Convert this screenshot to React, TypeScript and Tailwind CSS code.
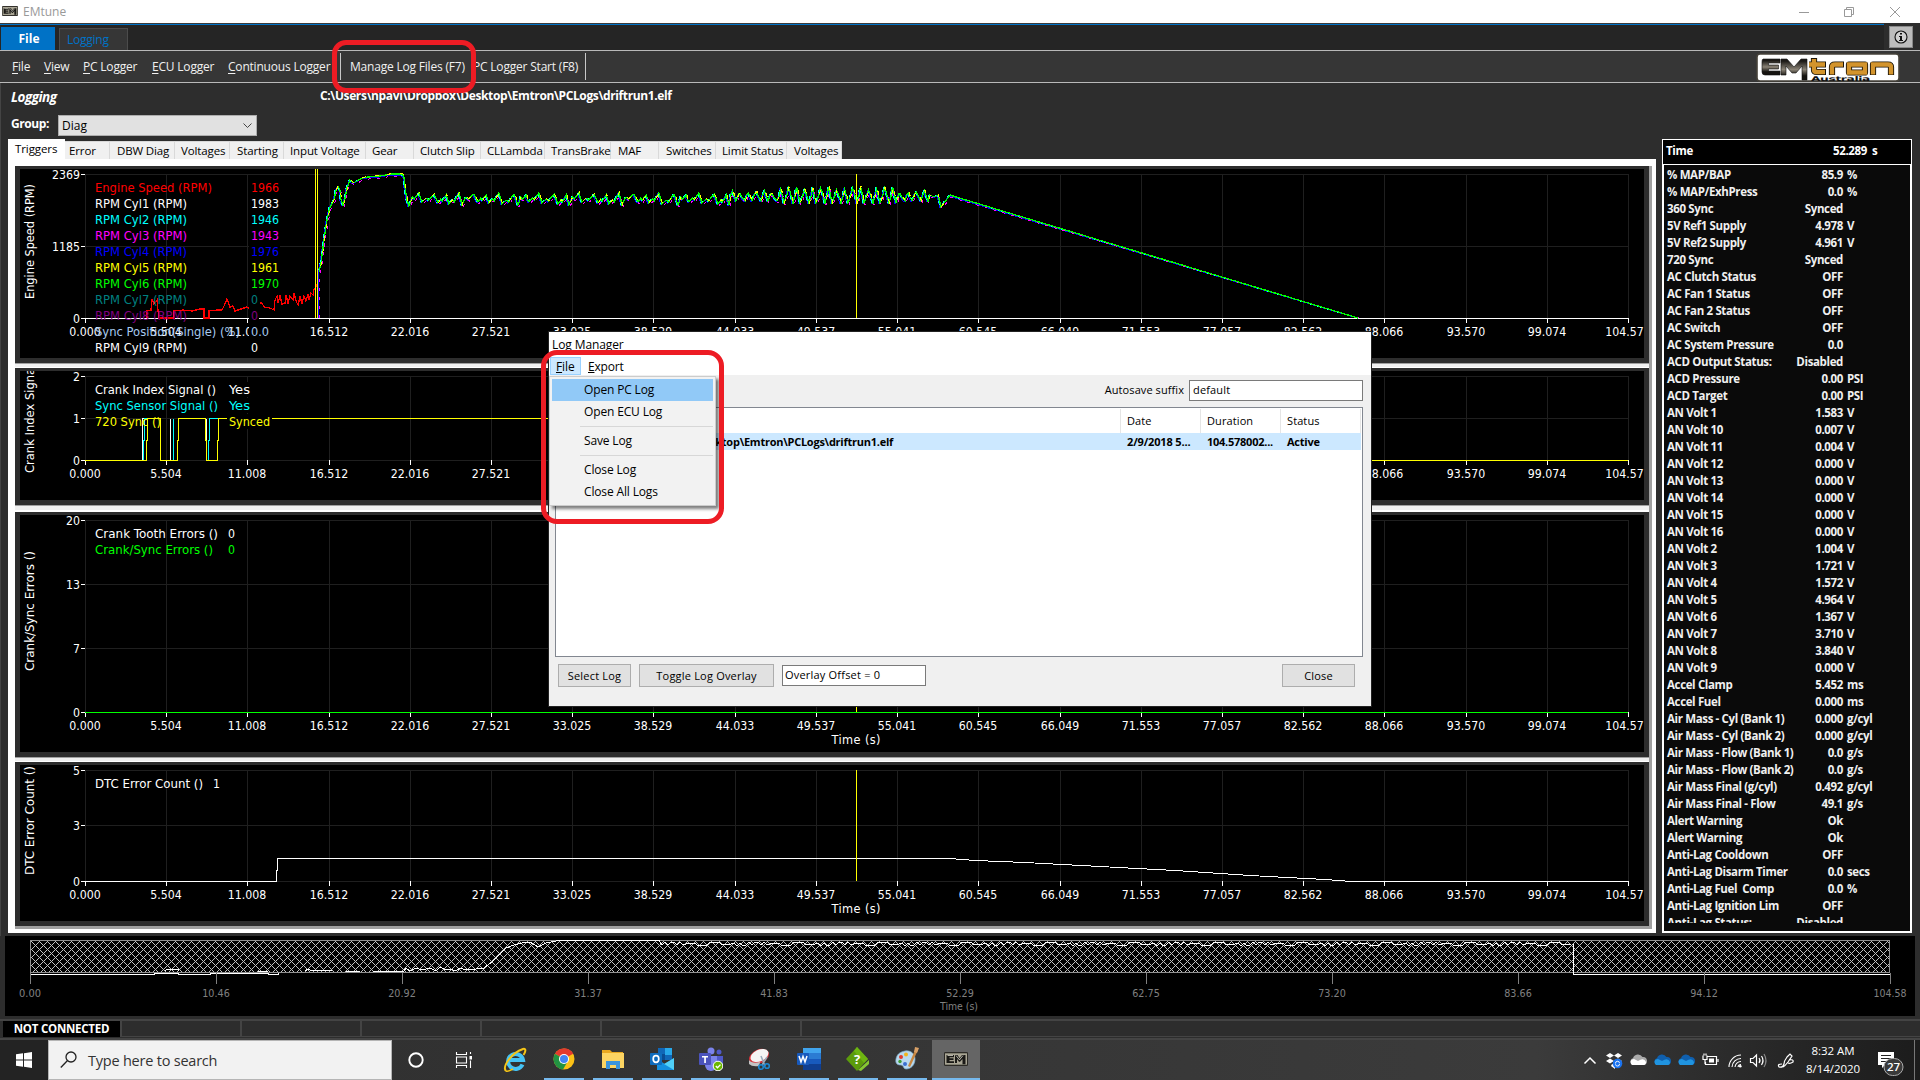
import React from "react";

const SEGOE = "font-['Open_Sans',sans-serif]";
const CHART_FONT = "'DejaVu Sans Condensed','DejaVu Sans',sans-serif";

/* ------------------------------------------------------------------ data */

const menuItems: [string, string][] = [
  ["File", "w-[32px]"],
  ["View", "w-[39px]"],
  ["PC Logger", "w-[69px]"],
  ["ECU Logger", "w-[76px]"],
  ["Continuous Logger", "w-[112px]"],
];

const tabs: [string, string, string][] = [
  ["Error", "w-[45px]", "pl-[4px]"],
  ["DBW Diag", "w-[65px]", "pl-[7px]"],
  ["Voltages", "w-[55px]", "pl-[6px]"],
  ["Starting", "w-[54px]", "pl-[7px]"],
  ["Input Voltage", "w-[82px]", "pl-[6px]"],
  ["Gear", "w-[48px]", "pl-[6px]"],
  ["Clutch Slip", "w-[67px]", "pl-[6px]"],
  ["CLLambda", "w-[64px]", "pl-[6px]"],
  ["TransBrake", "w-[66px]", "pl-[6px]"],
  ["MAF", "w-[48px]", "pl-[7px]"],
  ["Switches", "w-[57px]", "pl-[7px]"],
  ["Limit Status", "w-[71px]", "pl-[6px]"],
  ["Voltages", "w-[55px]", "pl-[7px]"],
];

const channels: [string, string, string][] = [
  ["% MAP/BAP", "85.9", "%"],
  ["% MAP/ExhPress", "0.0", "%"],
  ["360 Sync", "Synced", ""],
  ["5V Ref1 Supply", "4.978", "V"],
  ["5V Ref2 Supply", "4.961", "V"],
  ["720 Sync", "Synced", ""],
  ["AC Clutch Status", "OFF", ""],
  ["AC Fan 1 Status", "OFF", ""],
  ["AC Fan 2 Status", "OFF", ""],
  ["AC Switch", "OFF", ""],
  ["AC System Pressure", "0.0", ""],
  ["ACD Output Status:", "Disabled", ""],
  ["ACD Pressure", "0.00", "PSI"],
  ["ACD Target", "0.00", "PSI"],
  ["AN Volt 1", "1.583", "V"],
  ["AN Volt 10", "0.007", "V"],
  ["AN Volt 11", "0.004", "V"],
  ["AN Volt 12", "0.000", "V"],
  ["AN Volt 13", "0.000", "V"],
  ["AN Volt 14", "0.000", "V"],
  ["AN Volt 15", "0.000", "V"],
  ["AN Volt 16", "0.000", "V"],
  ["AN Volt 2", "1.004", "V"],
  ["AN Volt 3", "1.721", "V"],
  ["AN Volt 4", "1.572", "V"],
  ["AN Volt 5", "4.964", "V"],
  ["AN Volt 6", "1.367", "V"],
  ["AN Volt 7", "3.710", "V"],
  ["AN Volt 8", "3.840", "V"],
  ["AN Volt 9", "0.000", "V"],
  ["Accel Clamp", "5.452", "ms"],
  ["Accel Fuel", "0.000", "ms"],
  ["Air Mass - Cyl (Bank 1)", "0.000", "g/cyl"],
  ["Air Mass - Cyl (Bank 2)", "0.000", "g/cyl"],
  ["Air Mass - Flow (Bank 1)", "0.0", "g/s"],
  ["Air Mass - Flow (Bank 2)", "0.0", "g/s"],
  ["Air Mass Final (g/cyl)", "0.492", "g/cyl"],
  ["Air Mass Final - Flow", "49.1", "g/s"],
  ["Alert Warning", "Ok", ""],
  ["Alert Warning", "Ok", ""],
  ["Anti-Lag Cooldown", "OFF", ""],
  ["Anti-Lag Disarm Timer", "0.0", "secs"],
  ["Anti-Lag Fuel  Comp", "0.0", "%"],
  ["Anti-Lag Ignition Lim", "OFF", ""],
  ["Anti-Lag Status:", "Disabled", ""],
];

const X0 = 85;
const X1 = 1628;
const xLabels = [
  "0.000", "5.504", "11.008", "16.512", "22.016", "27.521", "33.025", "38.529", "44.033", "49.537",
  "55.041", "60.545", "66.049", "71.553", "77.057", "82.562", "88.066", "93.570", "99.074", "104.57",
];
const tickX = (i: number) => Math.round(X0 + (i * (X1 - X0)) / 19) + 0.5;

/* Saw-tooth section of the RPM traces: each tooth climbs with a notch, then drops. */
function rpmTrace(dx: number, dy: number): string {
  const pts: [number, number][] = [
    [318, 318], [318, 276], [321, 263], [324, 240], [327, 220], [330, 207], [334, 200], [336, 190], [338, 186],
    [340, 190], [341, 200], [343, 205], [345, 198], [347, 188], [350, 180], [353, 183], [357, 181], [362, 178],
    [368, 177], [380, 176], [392, 174], [402, 174], [404, 177], [405, 187], [407, 200], [409, 206],
  ];
  let x = 409;
  let k = 0;
  while (x < 728) {
    const p = k % 3 === 1 ? 16 : k % 3 === 2 ? 11 : 13;
    const low = 202 + ((k * 5) % 4);
    const high = 193 + ((k * 7) % 3);
    pts.push([x + p * 0.25, low - 5], [x + p * 0.4, low - 3], [x + p * 0.75, high], [x + p * 0.85, high + 4], [x + p, low]);
    x += p;
    k += 1;
  }
  while (x < 922) {
    const p = k % 2 ? 9 : 7;
    const mid = x > 770 && x < 890;
    const low = (mid ? 203 : 201) + ((k * 5) % 5);
    const high = (mid ? 187 : 191) + ((k * 3) % 4);
    pts.push([x + p * 0.3, low - 7], [x + p * 0.5, high], [x + p * 0.65, high + 3], [x + p, low]);
    x += p;
    k += 1;
  }
  pts.push([930, 195], [934, 197], [938, 195], [941, 207], [944, 203], [950, 195], [956, 197], [1358, 318]);
  return pts.map(([a, b]) => `${(a + dx).toFixed(1)},${b === 318 ? b : b + dy}`).join(" ");
}

const redTrace =
  "147,318 147,311 151,310 152,299 154,304 157,300 158,311 159,318 174,318 174,311 183,310 192,311 200,309 204,309 204,318 209,318 209,311 217,310 222,310 225,304 227,299 230,307 233,306 235,311 241,309 247,307 250,309";
const redTrace2 =
  "260,303 262,303 264,307 270,308 274,310 275,300 277,296 278,303 280,296 282,304 285,303 286,295 288,303 290,296 293,300 294,293 296,301 298,305 300,297 302,303 304,296 306,301 308,295 309,300 311,293 313,295 314,289 316,287 317,284";

/* ---------------------------------------------------------------- charts */

type Legend = { text: string; value: string; color: string; w: number };

function Chart(props: {
  top: number;
  height: number;
  yTicks: [number, string][];
  axisY: number;
  label: string;
  labelBottom: number;
  labelW: number;
  legendY: number;
  legend: Legend[];
  valueX: number;
  title?: number;
  axisWhite?: boolean;
  cursor?: boolean;
  children?: React.ReactNode;
}) {
  const { top, height, yTicks, axisY } = props;
  const topY = yTicks[0][0];
  return (
    <svg
      className="block w-[1624px] bg-black"
      height={height}
      viewBox={`20 ${top} 1624 ${height}`}
      style={{ fontFamily: CHART_FONT }}
    >
      <g stroke="#1f1f1f" shapeRendering="crispEdges">
        {xLabels.map((_, i) => (
          <line key={i} x1={tickX(i)} x2={tickX(i)} y1={topY} y2={axisY} />
        ))}
        {yTicks.map(([y]) => (
          <line key={y} x1={X0} x2={X1} y1={y + 0.5} y2={y + 0.5} />
        ))}
      </g>
      <g stroke="#fff" shapeRendering="crispEdges">
        {xLabels.map((_, i) => (
          <line key={i} x1={tickX(i)} x2={tickX(i)} y1={axisY} y2={axisY + 5} />
        ))}
        {yTicks.map(([y]) => (
          <line key={y} x1={X0 - 4} x2={X0} y1={y + 0.5} y2={y + 0.5} />
        ))}
        {props.axisWhite && <line x1={X0} x2={X1 + 1} y1={axisY + 0.5} y2={axisY + 0.5} />}
      </g>
      <g fill="#fff" fontSize="12.6">
        {xLabels.map((t, i) => (
          <text
            key={t}
            x={i === 19 ? 1624.4 : tickX(i) - 0.5}
            y={axisY + 18.3}
            textAnchor="middle"
            textLength={t.length === 5 ? 31.5 : 38.5}
            lengthAdjust="spacingAndGlyphs"
          >
            {t}
          </text>
        ))}
        {yTicks.map(([y, t]) => (
          <text key={t} x={X0 - 5} y={y + 5} textAnchor="end" textLength={t.length * 7} lengthAdjust="spacingAndGlyphs">
            {t}
          </text>
        ))}
        {props.title && (
          <text x="856" y={props.title} textAnchor="middle" textLength="49">
            Time (s)
          </text>
        )}
        <text transform={`translate(34 ${props.labelBottom}) rotate(-90)`} textLength={props.labelW} lengthAdjust="spacingAndGlyphs" fontSize="12.5">
          {props.label}
        </text>
      </g>
      {props.children}
      <g fontSize="12.8">
        {props.legend.map((l, i) => {
          const y = props.legendY + i * 16;
          return (
            <g key={l.text} fill={l.color}>
              <text x="95" y={y} textLength={l.w} lengthAdjust="spacingAndGlyphs">
                {l.text}
              </text>
              <rect x={props.valueX - 2} y={y - 12} width={l.value.length * 7 + 3} height="15" fill="#000" />
              <text x={props.valueX} y={y} textLength={l.value === "Yes" ? 21 : l.value === "Synced" ? 41 : l.value === "0.0" ? 18 : l.value.length * 7} lengthAdjust="spacingAndGlyphs">
                {l.value}
              </text>
            </g>
          );
        })}
      </g>
      {props.cursor && <line x1="856.5" x2="856.5" y1={topY} y2={axisY} stroke="#ff0" shapeRendering="crispEdges" />}
    </svg>
  );
}

const Splitter = ({ tall }: { tall?: boolean }) => (
  <div className={`${tall ? "h-[7px] border-b-2" : "h-[5px] border-b"} shrink-0 border-t border-t-[#a0a0a0] border-b-white bg-[#f0f0f0]`} />
);

function Charts() {
  const line = { fill: "none", shapeRendering: "crispEdges" as const };
  return (
    <div className="h-[774px] w-[1648px] border-t-[7px] border-r-[4px] border-b-[4px] border-l-[7px] border-white">
      <div className="flex h-[763px] w-[1637px] flex-col border-r-[3px] border-b-[3px] border-[#a0a0a0] bg-[#2d2d2d]">
        <div className="h-[197px] shrink-0 pt-[3px] pl-[5px]">
          <Chart
            top={169} height={189} axisY={318} axisWhite cursor
            yTicks={[[174, "2369"], [246, "1185"], [318, "0"]]}
            label="Engine Speed (RPM)" labelBottom={299} labelW={115} legendY={192} valueX={251}
            legend={[
              { text: "Engine Speed (RPM)", value: "1966", color: "#f00", w: 117 },
              { text: "RPM Cyl1 (RPM)", value: "1983", color: "#fff", w: 92 },
              { text: "RPM Cyl2 (RPM)", value: "1946", color: "#0ff", w: 92 },
              { text: "RPM Cyl3 (RPM)", value: "1943", color: "#f0f", w: 92 },
              { text: "RPM Cyl4 (RPM)", value: "1976", color: "#00f", w: 92 },
              { text: "RPM Cyl5 (RPM)", value: "1961", color: "#ff0", w: 92 },
              { text: "RPM Cyl6 (RPM)", value: "1970", color: "#0f0", w: 92 },
              { text: "RPM Cyl7 (RPM)", value: "0", color: "#008080", w: 92 },
              { text: "RPM Cyl8 (RPM)", value: "0", color: "#800080", w: 92 },
              { text: "Sync Position(Single) (%)", value: "0.0", color: "#a6caf0", w: 145 },
              { text: "RPM Cyl9 (RPM)", value: "0", color: "#fff", w: 92 },
            ]}
          >
            <g {...line}>
              <polyline points={rpmTrace(-1, 1)} stroke="#00f" />
              <polyline points={rpmTrace(1, 2)} stroke="#f0f" strokeDasharray="3 6" />
              <polyline points={rpmTrace(-1, 0)} stroke="#0ff" strokeDasharray="4 5" />
              <polyline points={rpmTrace(0, 0)} stroke="#0f0" strokeWidth="1.3" />
              <polyline points={rpmTrace(0.5, -0.5).split(" 950.")[0]} stroke="#ff0" strokeDasharray="4 9" />
              <polyline points={redTrace} stroke="#f00" strokeWidth="1.3" />
              <polyline points={redTrace2} stroke="#f00" strokeWidth="1.3" />
              <path d="M315.5 169V318M317.5 169V318" stroke="#ff0" />
              <path d="M318.5 270V318" stroke="#00f" />
            </g>
          </Chart>
          <div className="h-[5px]" />
        </div>
        <Splitter />
        <div className="h-[137px] shrink-0 pt-[3px] pl-[5px]">
          <Chart
            top={371} height={129} axisY={460}
            yTicks={[[376, "2"], [418, "1"], [460, "0"]]}
            label="Crank Index Signal ()" labelBottom={473} labelW={121} legendY={394} valueX={229}
            legend={[
              { text: "Crank Index Signal ()", value: "Yes", color: "#fff", w: 121 },
              { text: "Sync Sensor Signal ()", value: "Yes", color: "#0ff", w: 123 },
              { text: "720 Sync ()", value: "Synced", color: "#ff0", w: 66 },
            ]}
          >
            <g {...line}>
              <path d="M142.5 460V418.5H160M170.5 460V418.5M206.5 418.5V440" stroke="#fff" />
              <path d="M143.5 460V440H144.5V418.5H160M173.5 460V418.5M208.5 460V440H209.5V418.5H218" stroke="#0ff" />
              <path d="M85 460.5H146.5V440H147.5V418.5H160.5V460.5H177.5V440H178.5V418.5H205.5V440H206.5V460.5H217.5V440H218.5V418.5H860V460.5H1628" stroke="#ff0" />
            </g>
          </Chart>
        </div>
        <Splitter tall />
        <div className="h-[245px] shrink-0 pt-[3px] pl-[5px]">
          <Chart
            top={515} height={237} axisY={712} title={744} cursor
            yTicks={[[520, "20"], [584, "13"], [648, "7"], [712, "0"]]}
            label="Crank/Sync Errors ()" labelBottom={671} labelW={120} legendY={538} valueX={228}
            legend={[
              { text: "Crank Tooth Errors ()", value: "0", color: "#fff", w: 123 },
              { text: "Crank/Sync Errors ()", value: "0", color: "#0f0", w: 118 },
            ]}
          >
            <path d="M85 712.5H1628" stroke="#0f0" {...line} />
          </Chart>
        </div>
        <Splitter />
        <div className="pt-[3px] pl-[5px]">
          <Chart
            top={765} height={156} axisY={881} title={913} cursor
            yTicks={[[770, "5"], [825, "3"], [881, "0"]]}
            label="DTC Error Count ()" labelBottom={875} labelW={109} legendY={788} valueX={213}
            legend={[{ text: "DTC Error Count ()", value: "1", color: "#fff", w: 108 }]}
          >
            <path
              d="M85 881.5H276.5V870H277.5V858.5H950L975 860.5L1025 862.5L1100 866.5L1175 870.5L1250 875.5L1325 879.5L1352 881.5H1628"
              stroke="#fff"
              {...line}
            />
          </Chart>
        </div>
      </div>
    </div>
  );
}

/* -------------------------------------------------------------- overview */

const overviewTop = (() => {
  const out: string[] = [];
  for (let x = 572, k = 0; x < 1573; x += 3, k += 1) {
    const base = x < 660 ? 940.5 : 943;
    const amp = x < 660 ? [0, 0, 0, 0] : [0, 2, -1, 3, 1, -1, 2];
    out.push(`${x},${base + amp[(k * 3 + (k >> 2)) % amp.length]}`);
  }
  return out.join(" ");
})();

function Overview() {
  const labels = ["0.00", "10.46", "20.92", "31.37", "41.83", "52.29", "62.75", "73.20", "83.66", "94.12", "104.58"];
  return (
    <svg className="block bg-black" width="1910" height="80" viewBox="5 936 1910 80" style={{ fontFamily: CHART_FONT }}>
      <defs>
        <pattern id="lattice" width="8" height="8" patternUnits="userSpaceOnUse" patternTransform="translate(31 941)">
          <path
            d="M0 0h1v1h-1zM1 1h1v1h-1zM2 2h1v1h-1zM3 3h1v1h-1zM4 4h1v1h-1zM5 5h1v1h-1zM6 6h1v1h-1zM7 7h1v1h-1zM7 1h1v1h-1zM6 2h1v1h-1zM5 3h1v1h-1zM3 5h1v1h-1zM2 6h1v1h-1zM1 7h1v1h-1z"
            fill="#c0c0c0"
            shapeRendering="crispEdges"
          />
        </pattern>
      </defs>
      <rect x="30.5" y="940.5" width="1859" height="32" fill="url(#lattice)" stroke="#909090" shapeRendering="crispEdges" />
      <g fill="none" stroke="#fff" shapeRendering="crispEdges">
        <path d="M31 974.5H154V973H178V974.5H210V973H268V974.5H278V973" />
        <path d="M165 971L167 969H172L178 969L179 971M258 971H268M305 971L308 969L312 971L316 970L332 971M346 971H360M373 971H400L404 971L406 968L410 971L416 968L422 970L430 968L436 971L440 967L446 970L450 969L456 971L460 968L466 970L476 969L484 968L492 962L500 954L506 948L514 945L522 943L530 942L538 947L546 943L556 941L572 940.5" />
        <polyline points={overviewTop} />
        <path d="M572 940.5H660M1573.5 944V974.5H1890" />
      </g>
      <g stroke="#808080" shapeRendering="crispEdges">
        {labels.map((t, i) => (
          <line key={t} x1={30.5 + i * 186} x2={30.5 + i * 186} y1="973" y2="984" />
        ))}
      </g>
      <g fill="#808080" fontSize="11" textAnchor="middle">
        {labels.map((t, i) => (
          <text key={t} x={30 + i * 186} y="997" textLength={t.length === 4 ? 22 : t.length === 5 ? 27.5 : 33} lengthAdjust="spacingAndGlyphs">
            {t}
          </text>
        ))}
        <text x="959" y="1010" textLength="38" lengthAdjust="spacingAndGlyphs">Time (s)</text>
      </g>
    </svg>
  );
}

/* ---------------------------------------------------------------- header */

function EmBadge({ w, h }: { w: number; h: number }) {
  return (
    <svg width={w} height={h} viewBox="0 0 24 16" preserveAspectRatio="none" className="shrink-0">
      <rect width="24" height="16" rx="1.5" fill="#2c2a26" />
      <rect x="1" y="1.500" width="22" height="13" fill="#a9a594" />
      <path d="M2.500 3.500H10V6H5.500V7.200H9.500V9H5.500V10.500H10V12.500H2.500ZM11 12.500V3.500H13.500L15.500 7L18 3.500H21.500V14H18.500V8L16 11H15L13 8V12.500Z" fill="#1a1916" />
      <path d="M3.500 4H9M12 4L15.500 9L19 4" stroke="#e8e5da" strokeWidth="0.800" fill="none" />
    </svg>
  );
}

function TitleBar() {
  return (
    <div className="flex h-[23px] items-center bg-white">
      <div className="ml-[2px] mt-[-1px]"><EmBadge w={16} h={10} /></div>
      <span className="ml-[5px] pt-px text-[12px] text-[#999]">EMtune</span>
      <svg className="ml-auto mr-[18px]" width="104" height="14" viewBox="1798 3 104 14" fill="none" stroke="#999">
        <path d="M1799 10.5H1809" />
        <path d="M1844.500 7.500H1851.500V14.500H1844.500ZM1846.500 7V5.500H1853.500V12.500H1852" />
        <path d="M1890 5L1900 15M1900 5L1890 15" />
      </svg>
    </div>
  );
}

function Logo() {
  return (
    <svg width="144" height="29" viewBox="0 0 144 29" className="block">
      <defs>
        <linearGradient id="em" x1="0" y1="0" x2="0" y2="1">
          <stop offset="0.1" stopColor="#1c1a17" />
          <stop offset="0.5" stopColor="#8a8376" />
          <stop offset="0.8" stopColor="#15130f" />
        </linearGradient>
      </defs>
      <rect x="1" y="1" width="142" height="27" rx="3" fill="#fff" stroke="#46423a" strokeWidth="1.6" />
      <path d="M7 6H24V10H12.500V12H22.500V16H12.500V18H24V22H9Q6 22 6 19V9Q6 6 7 6Z" fill="url(#em)" stroke="#111" strokeWidth="0.6" />
      <path d="M25 22V6H31L38 14L45 6H51V27H46V13L40 20H36L30 13V22Z" fill="url(#em)" stroke="#111" strokeWidth="0.6" />
      <g fill="none" stroke="#1b1408" strokeWidth="6.200" strokeLinejoin="round">
        <path d="M58 5V17Q58 19 61 19H70M53 11.500H70M76 22V14Q76 11.500 79 11.500H88M93 11.500H109V19.500H93ZM117 22V11.500H132Q135 11.500 135 14V22" />
      </g>
      <g fill="none" stroke="#d3942c" strokeWidth="4.400">
        <path d="M58 6V17Q58 19 61 19H69M53 11.500H69M76 21.500V14Q76 11.500 79 11.500H87M93 11.500H109V19.500H93ZM117 21.500V11.500H132Q135 11.500 135 14V21.500" />
      </g>
      <text x="55" y="27.500" fontFamily="'DejaVu Sans',sans-serif" fontWeight="bold" fontSize="6.5" textLength="59" lengthAdjust="spacingAndGlyphs" fill="#111">
        Australia
      </text>
    </svg>
  );
}

function Ribbon() {
  return (
    <>
      <div className="flex h-[27px] bg-[#252525]">
        <div className="flex flex-1 border-t border-[#3a3a3a]">
          <div className="flex flex-1 border-t border-[#0072c6] pl-px">
            <div className="mt-[2px] flex w-[54px] items-center justify-center bg-[#0072c6] pt-px pl-[2px] text-[12px] font-bold text-white">File</div>
            <div className="mt-[3px] ml-[4px] w-[69px] border border-b-0 border-[#4c4c4c] bg-[#363636] pt-[2px] pl-[7px] text-[12px] tracking-[-0.25px] text-[#0072c6]">Logging</div>
          </div>
        </div>
        <div className="w-[36px] bg-[#2d2d2d] pt-[3px] pl-[5px]">
          <div className="flex h-[22px] w-[24px] items-center justify-center border border-[#8a8a8a] bg-[#bdbdbd]">
            <svg width="14" height="14" viewBox="0 0 14 14">
              <circle cx="7" cy="7" r="6" fill="#d0d0d0" stroke="#111" strokeWidth="1.1" />
              <path d="M6 3h2v1.600H6ZM5 6h3v4h1v1H5v-1h1V7H5Z" fill="#111" />
            </svg>
          </div>
        </div>
      </div>
      <div className="flex h-[33px] items-center border-t border-b border-[#b9b9b9] bg-[#363636] pl-[12px] text-[12px] tracking-[-0.2px] text-[#f1f1f1]">
        {menuItems.map(([t, w]) => (
          <span key={t} className={`${w} shrink-0 whitespace-nowrap`}>
            <span className="underline underline-offset-2">{t[0]}</span>
            {t.slice(1)}
          </span>
        ))}
        <span className="h-[27px] w-px bg-[#c8c8c8]" />
        <span className="ml-[9px] w-[123px] whitespace-nowrap">Manage Log Files (F7)</span>
        <span className="w-[112px] whitespace-nowrap">PC Logger Start (F8)</span>
        <span className="h-[27px] w-px bg-[#c8c8c8]" />
        <div className="mt-px mr-[20px] ml-auto"><Logo /></div>
      </div>
    </>
  );
}

/* ------------------------------------------------------------ side panel */

function SidePanel() {
  return (
    <div className="h-[794px] w-[250px] border border-white bg-[#0a0a0a] text-[11.5px] font-bold tracking-[-0.36px] text-[#f0f0f0]">
      <div className="flex h-[24px] items-center bg-black pb-[3px] pl-[3px] leading-[17px] text-white">
        <span className="w-[120px]">Time</span>
        <span className="w-[81px] text-right">52.289</span>
        <span className="ml-[5px]">s</span>
      </div>
      <div className="h-[768px] border border-white bg-[#0a0a0a] pt-px">
        <div className="h-[757px] overflow-hidden pl-[3px]">
          {channels.map(([n, v, u], i) => (
            <div key={i} className="flex h-[17px] items-center leading-[17px] whitespace-pre">
              <span className="w-[122px]">{n}</span>
              <span className="w-[54px] text-right">{v}</span>
              <span className="ml-[4px]">{u}</span>
            </div>
          ))}
        </div>
      </div>
    </div>
  );
}

/* ---------------------------------------------------------------- dialog */

function MenuRow({ t, active }: { t: string; active?: boolean }) {
  return <div className={`flex h-[22px] items-center pl-[32px] ${active ? "bg-[#91c9f7]" : ""}`}>{t}</div>;
}
const MenuSep = () => (
  <div className="flex h-[7px] items-center pl-[28px]">
    <div className="h-px flex-1 bg-[#d7d7d7]" />
  </div>
);

function LogManager() {
  return (
    <div className="absolute top-[332px] left-[549px] flex h-[374px] w-[822px] flex-col bg-[#f0f0f0] text-[12px] text-black shadow-[0_0_0_1px_#222]">
      <div className="h-[25px] bg-white pt-[4px] pl-[3px] leading-[17px] tracking-[-0.1px]">Log Manager</div>
      <div className="flex h-[18px] bg-white pl-px leading-[17px]">
        <span className="w-[31px] border border-[#99d1ff] bg-[#cce8ff] pl-[5px] tracking-[-0.1px]"><span className="underline">F</span>ile</span>
        <span className="pt-px pl-[7px] tracking-[-0.2px]"><span className="underline">E</span>xport</span>
      </div>
      <div className="flex h-[32px] items-start justify-end pt-[5px] pr-[8px]">
        <span className="mr-[5px] pt-[2px] text-[11px] tracking-[0.08px]">Autosave suffix</span>
        <div className="h-[21px] w-[174px] border border-[#7a7a7a] bg-white pl-[3px] text-[11px] leading-[18px] tracking-[0.15px]">default</div>
      </div>
      <div className="ml-[6px] h-[250px] w-[808px] border border-[#828790] bg-white text-[11px]">
        <div className="flex h-[25px] pt-px leading-[23px] tracking-[0.1px]">
          <span className="w-[565px] border-r border-[#e5e5e5]" />
          <span className="w-[80px] border-r border-[#e5e5e5] pl-[6px]">Date</span>
          <span className="w-[80px] border-r border-[#e5e5e5] pl-[6px]">Duration</span>
          <span className="w-[80px] border-r border-[#e5e5e5] pl-[6px]">Status</span>
        </div>
        <div className="flex h-[17px] w-[805px] bg-[#cce8ff] leading-[17px] font-bold tracking-[-0.25px]">
          <span className="w-[337px] text-right">C:\Users\npavi\Dropbox\Desktop\Emtron\PCLogs\driftrun1.elf</span>
          <span className="ml-[234px] w-[80px] tracking-[-0.15px]">2/9/2018 5...</span>
          <span className="w-[80px]">104.578002...</span>
          <span>Active</span>
        </div>
      </div>
      <div className="flex pt-[7px] pl-[9px] text-[11px] tracking-[0.2px]">
        <div className="flex h-[23px] w-[73px] items-center justify-center border border-[#adadad] bg-[#e1e1e1] pt-px">Select Log</div>
        <div className="ml-[8px] flex h-[23px] w-[135px] items-center justify-center border border-[#adadad] bg-[#e1e1e1] pt-px">Toggle Log Overlay</div>
        <div className="mt-px ml-[8px] h-[21px] w-[144px] border border-[#7a7a7a] bg-white pl-[2px] leading-[18px]">Overlay Offset = 0</div>
        <div className="mr-[16px] ml-auto flex h-[23px] w-[73px] items-center justify-center border border-[#adadad] bg-[#e1e1e1] pt-px">Close</div>
      </div>
      <div className="absolute top-[44px] left-0 h-[130px] w-[167px] border border-[#ccc] bg-[#f2f2f2] p-[2px] tracking-[-0.15px] shadow-[3px_3px_3px_rgba(0,0,0,0.5)]">
        <MenuRow t="Open PC Log" active />
        <MenuRow t="Open ECU Log" />
        <MenuSep />
        <MenuRow t="Save Log" />
        <MenuSep />
        <MenuRow t="Close Log" />
        <MenuRow t="Close All Logs" />
      </div>
      <div className="absolute top-[18px] left-[-8px] h-[174px] w-[183px] rounded-[16px] border-[5px] border-[#ed1c24]" />
    </div>
  );
}

/* --------------------------------------------------------------- taskbar */

const Ico = ({ children }: { children: React.ReactNode }) => (
  <svg width="24" height="24" viewBox="0 0 24 24">{children}</svg>
);

const taskIcons: React.ReactNode[] = [
  <Ico key="chrome">
    <circle cx="12" cy="12" r="10.500" fill="#fbc116" />
    <path d="M12 12L2.900 6.750A10.500 10.500 0 0 1 21.100 6.750Z" fill="#e33b2e" />
    <path d="M12 1.500A10.500 10.500 0 0 1 21.300 7H12Z" fill="#e33b2e" />
    <path d="M2.900 6.750A10.500 10.500 0 0 0 11 22.450L15.500 14.500L12 12Z" fill="#229342" />
    <circle cx="12" cy="12" r="5" fill="#fff" />
    <circle cx="12" cy="12" r="4" fill="#4285f4" />
  </Ico>,
  <Ico key="explorer">
    <path d="M1 3H9L11 5H22V21H1Z" fill="#e9a820" />
    <path d="M1 6H23V21H1Z" fill="#fcd462" />
    <path d="M5 22V14H19V22H15V18H9V22Z" fill="#3a94dc" />
  </Ico>,
  <Ico key="outlook">
    <path d="M8 1H22V13H8Z" fill="#1067b8" />
    <path d="M15 1H22V8H15Z" fill="#28a8ea" />
    <path d="M8 7H15V13H8Z" fill="#0a4c93" />
    <path d="M7 12L15 17L24 11V23H7Z" fill="#1490df" />
    <path d="M24 11V23L14 17Z" fill="#50d0f8" />
    <rect x="0" y="6" width="12" height="12" rx="1" fill="#0f6cbd" />
    <ellipse cx="6" cy="12" rx="2.800" ry="3.300" fill="none" stroke="#fff" strokeWidth="1.700" />
  </Ico>,
  <Ico key="teams">
    <circle cx="12" cy="4" r="3.500" fill="#7b83eb" />
    <circle cx="20" cy="5" r="2.500" fill="#5059c9" />
    <path d="M16 9H24V16A4 4 0 0 1 16 17Z" fill="#5059c9" />
    <path d="M6 9H18V18A6 6 0 0 1 6 18Z" fill="#7b83eb" />
    <rect x="0" y="6" width="12" height="12" rx="1" fill="#4b53bc" />
    <path d="M3 9H9V10.600H6.900V16H5.200V10.600H3Z" fill="#fff" />
    <circle cx="19" cy="19" r="4.800" fill="#6bb700" stroke="#fff" />
    <path d="M16.800 19L18.500 20.800L21.500 17.600" stroke="#fff" fill="none" strokeWidth="1.300" />
  </Ico>,
  <Ico key="snip">
    <ellipse cx="11" cy="9.500" rx="10.500" ry="7" fill="#d8343a" transform="rotate(-25 11 9.500)" />
    <ellipse cx="11.500" cy="8.500" rx="9.500" ry="5.800" fill="#f4f4f4" transform="rotate(-25 11.500 8.500)" />
    <path d="M1 13Q4 17 12 15L11 19Q4 20 1 17Z" fill="#c4c4c4" />
    <path d="M13 9L17 19M19 10L14 18" stroke="#9ab" strokeWidth="1.500" />
    <circle cx="13" cy="20" r="2.300" fill="none" stroke="#1e88d0" strokeWidth="1.600" />
    <circle cx="19" cy="19" r="2.300" fill="none" stroke="#1e88d0" strokeWidth="1.600" />
  </Ico>,
  <Ico key="word">
    <path d="M6 1H24V7H6Z" fill="#41a5ee" />
    <path d="M6 6H24V12H6Z" fill="#2b7cd3" />
    <path d="M6 12H24V18H6Z" fill="#185abd" />
    <path d="M6 17H24V23H6Z" fill="#103f91" />
    <rect x="0" y="6" width="12" height="12" rx="1" fill="#185abd" />
    <path d="M2 9L4 15L6 9.500L8 15L10 9" stroke="#fff" fill="none" strokeWidth="1.500" />
  </Ico>,
  <Ico key="help">
    <path d="M11 0L22 12L11 24L0 12Z" fill="#5c9c0c" />
    <path d="M11 0L22 12L18 16L8 4Z" fill="#6db512" />
    <path d="M12 23L23 13V17L15 24Z" fill="#86c832" />
    <text x="11" y="16.500" fontSize="13" fontWeight="bold" textAnchor="middle" fill="#fff" fontFamily="'Open Sans',sans-serif">?</text>
  </Ico>,
  <Ico key="paint">
    <path d="M10 4C16 3 20 7 20 12C20 18 16 22 11 22C8 22 9 18 6 18C3 18 0 17 1 12C2 7 5 5 10 4Z" fill="#b9d9ee" stroke="#7fb0d0" strokeWidth="0.700" />
    <circle cx="6" cy="10" r="2" fill="#e23b2e" />
    <circle cx="11" cy="7.500" r="2" fill="#f0b51d" />
    <circle cx="5" cy="14.500" r="1.700" fill="#3f9c35" />
    <circle cx="10" cy="17" r="2" fill="#3b6fd0" />
    <path d="M21 1L23 3L15 20L13 19Z" fill="#c88741" />
    <path d="M20 0L24 1L22 6L19 5Z" fill="#d9a066" />
  </Ico>,
];

function Tray() {
  const cloud = "M3.500 12A3.500 3.500 0 0 1 3 5.200A5.200 5.200 0 0 1 12.500 4A4 4 0 0 1 13.500 12Z";
  const front = "M2 12C-1 9 1 6 4 6L8 8Q14 4 16 9Q16 12 14 12Z";
  return (
    <svg width="220" height="30" viewBox="1582 1045 220 30" fill="none" stroke="#fff" strokeWidth="1.200">
      <path d="M1585.500 1063.500L1591 1058L1596.500 1063.500" strokeWidth="1.500" />
      <g fill="#fff" stroke="none">
        <path d="M1611 1053l4 2.500l-4 2.500l-4-2.500zM1619 1053l4 2.500l-4 2.500l-4-2.500zM1611 1058.500l4 2.500l-4 2.500l-4-2.500zM1619 1058.500l4 2.500l-4 2.500l-4-2.500zM1613 1064l3 1v4l-4-3z" />
      </g>
      <circle cx="1618.500" cy="1063.500" r="4.800" fill="#1a73f0" stroke="none" />
      <path d="M1616.500 1063.500a2 2 0 0 1 4-.5M1620.500 1063.800a2 2 0 0 1-4 .5" strokeWidth="0.900" />
      <g stroke="none">
        <g transform="translate(1631 1053)"><path d={cloud} fill="#a9a9a9" /><path d={front} fill="#fff" /></g>
        <g transform="translate(1655 1053)"><path d={cloud} fill="#0f5fae" /><path d={front} fill="#2094e0" /></g>
        <g transform="translate(1679 1053)"><path d={cloud} fill="#0f5fae" /><path d={front} fill="#2094e0" /></g>
      </g>
      <path d="M1708 1056.500H1717.500V1064.500H1706.500V1062M1719 1059V1062M1704 1055.500V1059.500H1708V1055.500M1706 1059.500V1064M1705 1053.500V1055.500M1707 1053.500V1055.500" />
      <rect x="1710" y="1058.500" width="5" height="4" fill="#fff" stroke="none" />
      <path d="M1730 1067A12 12 0 0 1 1742 1055M1733 1067A9 9 0 0 1 1742 1058.500M1736 1067A6 6 0 0 1 1742 1061.500M1739 1067A3 3 0 0 1 1742 1064.500" strokeWidth="1.100" />
      <circle cx="1741.300" cy="1066.200" r="1.300" fill="#fff" stroke="none" />
      <path d="M1751.500 1058.500H1754L1757.500 1055V1066L1754 1062.500H1751.500ZM1760 1058Q1762 1060.500 1760 1063M1762.500 1056Q1765.500 1060.500 1762.500 1065" />
      <path d="M1765 1054Q1769 1060.500 1765 1067" stroke="#888" />
      <path d="M1783 1064Q1778 1064 1780 1067Q1784 1068 1785 1064Q1785 1061 1788 1057L1791 1054L1793 1056L1789 1062Q1786 1066 1784 1067M1790 1060Q1795 1059 1794 1062Q1791 1064 1789 1063" />
    </svg>
  );
}

function Taskbar() {
  return (
    <div className="flex h-[40px] items-stretch bg-linear-to-r from-[#2e2e2e] via-[#3b3b3b] via-80% to-[#1c1c1c] text-white">
      <div className="flex w-[48px] items-center justify-center bg-[#232323]">
        <svg width="16" height="16" viewBox="0 0 16 16" fill="#fff">
          <path d="M0 2.300L7 1.300V7.500H0ZM8 1.200L16 0V7.500H8ZM0 8.500H7V14.700L0 13.700ZM8 8.500H16V16L8 14.800Z" />
        </svg>
      </div>
      <div className="flex h-[40px] w-[344px] items-center border border-[#b5b5b5] bg-[#f2f2f2] pl-[11px]">
        <svg width="17" height="18" viewBox="0 0 17 18" fill="none" stroke="#222" strokeWidth="1.300">
          <circle cx="11" cy="6" r="5" />
          <path d="M7.300 9.700L0.800 16.500" />
        </svg>
        <span className="ml-[11px] pt-[2px] text-[14.5px] tracking-[-0.22px] text-[#333]">Type here to search</span>
      </div>
      <div className="flex w-[47px] items-center justify-center">
        <svg width="16" height="16" viewBox="0 0 16 16"><circle cx="8" cy="8" r="6.700" fill="none" stroke="#fff" strokeWidth="1.900" /></svg>
      </div>
      <div className="flex w-[49px] items-center justify-center">
        <svg width="18" height="16" viewBox="0 0 18 16" fill="none" stroke="#fff" strokeWidth="1.100">
          <path d="M1.500 0V2.500H11.500V0M1.500 5H11.500V11H1.500ZM1.500 16V13.500H11.500V16M15.500 0V2M15.500 8.500V16" />
          <path d="M14.500 4H17V7.500H14.500Z" fill="#fff" stroke="none" />
        </svg>
      </div>
      <div className="flex w-[56px] items-center justify-center pr-[3px]">
        <svg width="24" height="26" viewBox="0 0 24 26" fill="none">
          <path d="M19.500 17.500A7.500 7.500 0 1 1 20 13H6.500" stroke="#45c3f5" strokeWidth="4" />
          <path d="M3 24C-1 20 8 6 20 2C24 1 22 6 20.500 8" stroke="#f5c518" strokeWidth="2" />
          <path d="M3 24C5 25 8 23 10 22" stroke="#f5c518" strokeWidth="1.500" />
        </svg>
      </div>
      <div className="flex gap-[9px]">
        {taskIcons.map((ic, i) => (
          <div key={i} className="flex h-[40px] w-[40px] items-center justify-center border-b-2 border-[#76b9ed]">{ic}</div>
        ))}
      </div>
      <div className="ml-[5px] flex w-[48px] items-center justify-center border-b-2 border-[#76b9ed] bg-[#656565]"><EmBadge w={24} h={14} /></div>
      <div className="ml-auto flex">
        <div className="mt-[5px]"><Tray /></div>
        <div className="w-[64px] pt-[2px] text-center text-[11.5px] leading-[18px] tracking-[-0.05px]">
          <div>8:32 AM</div>
          <div>8/14/2020</div>
        </div>
        <div className="ml-[12px] pt-[8px]">
          <svg width="30" height="30" viewBox="0 0 30 30">
            <path d="M1 4H17V17H8L5 20V17H1Z" fill="#fff" />
            <path d="M4 7.500H14M4 10.500H14M4 13.500H11" stroke="#222" />
            <rect x="7" y="10.500" width="19" height="17" rx="8.500" fill="#3a3a3a" stroke="#aaa" />
            <text x="16.500" y="23" fontSize="11.500" fontWeight="600" textAnchor="middle" fill="#fff" fontFamily="'Open Sans',sans-serif">27</text>
          </svg>
        </div>
        <div className="ml-[7px] w-[6px] border-l border-[#777]" />
      </div>
    </div>
  );
}

/* ------------------------------------------------------------------- app */

export default function App() {
  return (
    <div className={`relative flex h-[1080px] w-[1920px] flex-col overflow-hidden bg-[#2d2d2d] ${SEGOE}`}>
      <TitleBar />
      <Ribbon />
      <div className="flex h-[853px] justify-between border-l border-[#444] pr-[8px] pl-[7px]">
        <div className="w-[1648px]">
          <div className="flex h-[28px] pt-[5px] pl-[3px] text-white">
            <span className="w-[309px] text-[13.5px] leading-[19px] font-bold tracking-[-0.5px] italic">Logging</span>
            <span className="text-[12px] leading-[15px] font-bold tracking-[-0.38px] whitespace-nowrap">C:\Users\npavi\Dropbox\Desktop\Emtron\PCLogs\driftrun1.elf</span>
          </div>
          <div className="flex h-[28px] pt-[4px] pl-[3px]">
            <span className="w-[47px] text-[12px] leading-[17px] font-bold tracking-[-0.4px] text-white">Group:</span>
            <div className="flex h-[21px] w-[199px] items-center justify-between border border-[#adadad] bg-[#e1e1e1] pr-[4px] pl-[3px] text-[12px] text-black">
              Diag
              <svg width="9" height="6" viewBox="0 0 9 6" fill="none" stroke="#444"><path d="M0.500 0.500L4.500 4.500L8.500 0.500" /></svg>
            </div>
          </div>
          <div className="flex h-[20px] items-end text-[11.5px] text-black">
            <div className="h-[20px] w-[57px] bg-white pl-[7px] leading-[19px] tracking-[-0.1px]">Triggers</div>
            {tabs.map(([t, w, p], i) => (
              <div key={i} className={`${w} ${p} h-[18px] border-t border-r border-[#d9d9d9] bg-[#f0f0f0] leading-[17px] tracking-[-0.13px] whitespace-nowrap`}>{t}</div>
            ))}
          </div>
          <Charts />
        </div>
        <div className="pt-[56px]">
          <SidePanel />
        </div>
      </div>
      <div className="flex h-[83px] justify-center pr-px">
        <Overview />
      </div>
      <div className="flex h-[21px] border-t-2 border-b-2 border-[#444] text-white">
        <div className="ml-[3px] flex h-[16px] w-[117px] items-center justify-center bg-black text-[11.5px] font-bold tracking-[-0.25px]">NOT CONNECTED</div>
        {["w-[120px]", "w-[120px]", "w-[120px]", "w-[120px]", "w-[200px]", "flex-1"].map((w, i) => (
          <div key={i} className={`${w} h-[16px] border-b border-l-2 border-[#444]`} />
        ))}
      </div>
      <Taskbar />
      <LogManager />
      <div className="absolute top-[40px] left-[332px] h-[53px] w-[144px] rounded-[14px] border-[5px] border-[#ed1c24]" />
    </div>
  );
}
